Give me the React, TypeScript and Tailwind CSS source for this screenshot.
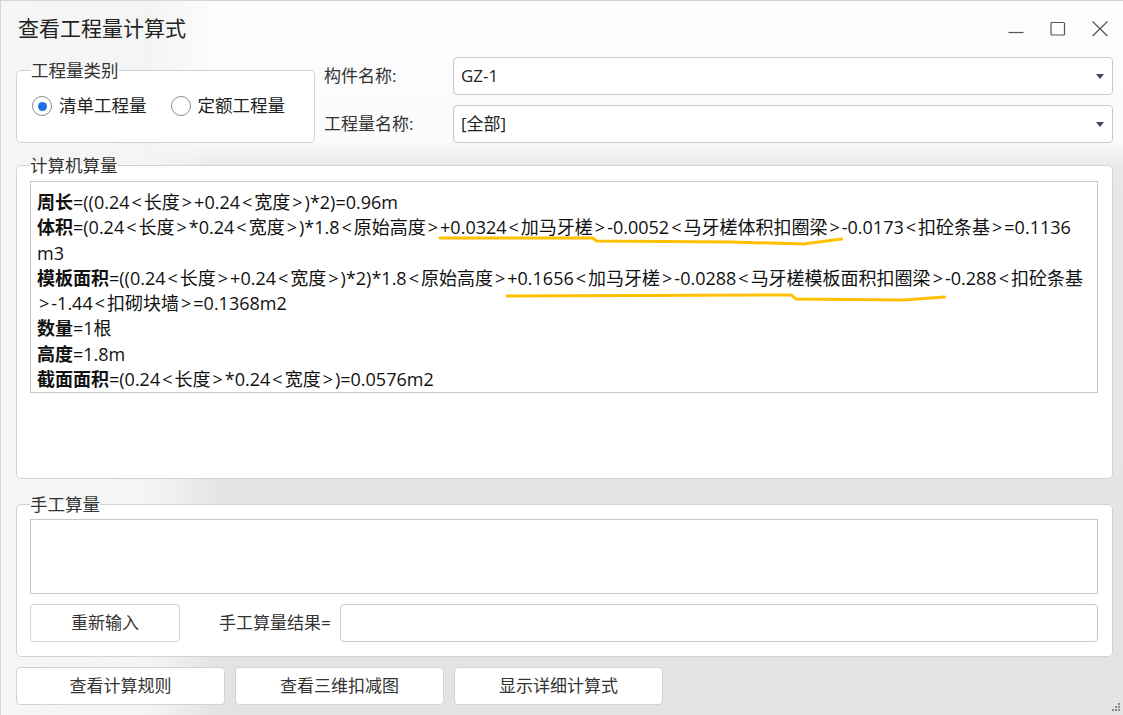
import React from "react";

const F = "font-['Open_Sans','Noto_Sans_CJK_SC',sans-serif]";

function T({ s }: { s: string }) {
  const parts = s.split(/([<>])/);
  return (
    <>
      {parts.map((p, i) =>
        p === "<" || p === ">" ? (
          <span key={i} className="px-[2px]">
            {p}
          </span>
        ) : (
          <React.Fragment key={i}>{p}</React.Fragment>
        )
      )}
    </>
  );
}

function Radio({ checked, label }: { checked?: boolean; label: string }) {
  return (
    <div className="flex items-center gap-[7px]">
      <span className="w-[20px] h-[20px] rounded-full border border-[#8c8c8c] bg-white flex items-center justify-center">
        {checked && <span className="w-[9px] h-[9px] rounded-full bg-[#1f6fe0]" />}
      </span>
      <span className="text-[17.5px] text-[#222] leading-none">{label}</span>
    </div>
  );
}

function Select({ value }: { value: string }) {
  return (
    <div className="flex-1 h-[38px] bg-white border border-[#c9c9c9] rounded-[4px] flex items-center justify-between pl-[7px] pr-[8px]">
      <span className="text-[17px] text-[#222]">{value}</span>
      <svg width="8" height="5" viewBox="0 0 8 5">
        <path d="M0 0 L8 0 L4 5 Z" fill="#3d4656" />
      </svg>
    </div>
  );
}

function Btn({ label, w }: { label: string; w: string }) {
  return (
    <div className={`${w} h-[38px] bg-white border border-[#d3d3d3] rounded-[4px] flex items-center justify-center text-[17px] text-[#333]`}>
      {label}
    </div>
  );
}

function U({ s, pts, top }: { s: string; pts: string; top: string }) {
  return (
    <span className="relative">
      <T s={s} />
      <svg
        className={`absolute left-0 w-full ${top} h-[10px] overflow-visible pointer-events-none`}
        viewBox="0 0 100 10"
        preserveAspectRatio="none"
      >
        <polyline
          points={pts}
          fill="none"
          stroke="#ffc000"
          strokeWidth="3"
          strokeLinecap="round"
          strokeLinejoin="round"
          vectorEffect="non-scaling-stroke"
        />
      </svg>
    </span>
  );
}

export default function App() {
  return (
    <div
      className={`${F} relative w-[1123px] h-[715px] overflow-hidden border-l border-t border-[#d6d6d6] bg-[linear-gradient(90deg,#f6f6f6_0px,#f4f4f4_150px,rgba(240,240,240,0)_215px),linear-gradient(180deg,#fdfdfd_0px,#fbfbfb_140px,#e8e8e8_168px,#e3e3e3_100%)] flex flex-col`}
    >
      {/* Title bar */}
      <div className="h-[56px] flex items-center justify-between pl-[17px] pr-[2px]">
        <span className="text-[21px] text-[#222]">查看工程量计算式</span>
        <div className="flex items-center">
          <div className="w-[42px] h-[40px] flex items-center justify-center">
            <svg width="16" height="16" viewBox="0 0 16 16">
              <line x1="0.5" y1="11.5" x2="15.5" y2="11.5" stroke="#555" strokeWidth="1.2" />
            </svg>
          </div>
          <div className="w-[42px] h-[40px] flex items-center justify-center">
            <svg width="16" height="16" viewBox="0 0 16 16">
              <rect x="1" y="1.5" width="13.5" height="12.5" rx="1" fill="none" stroke="#555" strokeWidth="1.2" />
            </svg>
          </div>
          <div className="w-[42px] h-[40px] flex items-center justify-center">
            <svg width="16" height="16" viewBox="0 0 16 16">
              <path d="M0.5 0.5 L15.5 15 M15.5 0.5 L0.5 15" stroke="#555" strokeWidth="1.2" fill="none" />
            </svg>
          </div>
        </div>
      </div>

      <div className="flex flex-col pl-[15px] pr-[10px]">
        {/* Top row */}
        <div className="flex h-[86px]">
          <fieldset className="w-[299px] h-[85px] mt-[1px] border border-[#d2d2d2] rounded-[5px] bg-white pl-[14px] pr-[14px]">
            <legend className="text-[17.5px] leading-[24px] text-[#333] px-0">工程量类别</legend>
            <div className="flex items-center gap-[24px] mt-[14px] pl-[1px]">
              <Radio checked label="清单工程量" />
              <Radio label="定额工程量" />
            </div>
          </fieldset>
          <div className="flex-1 flex flex-col gap-[10px] ml-[9px]">
            <div className="flex items-center">
              <span className="w-[129px] text-[17px] text-[#333]">构件名称:</span>
              <Select value="GZ-1" />
            </div>
            <div className="flex items-center">
              <span className="w-[129px] text-[17px] text-[#333]">工程量名称:</span>
              <Select value="[全部]" />
            </div>
          </div>
        </div>

        {/* 计算机算量 */}
        <fieldset className="mt-[10px] h-[326px] border border-[#d2d2d2] rounded-[5px] bg-white pl-[13px] pr-[14px] pb-[13px] flex flex-col">
          <legend className="text-[17.5px] leading-[24px] text-[#333] px-0">计算机算量</legend>
          <div className="mt-[4px] flex-1 border border-[#c9c9c9] bg-white pt-[8px] pl-[6px] text-[18px] leading-[25.3px] text-[#111] whitespace-nowrap">
            <div><b>周长</b><T s="=((0.24<长度>+0.24<宽度>)*2)=0.96m" /></div>
            <div>
              <b>体积</b><T s="=(0.24<长度>*0.24<宽度>)*1.8<原始高度>" />
              <U top="top-[calc(100%-2px)]" pts="0,1 38,1 39,4 72.4,5 90.5,7 100,2" s="+0.0324<加马牙槎>-0.0052<马牙槎体积扣圈梁>" />
              <T s="-0.0173<扣砼条基>=0.1136" />
            </div>
            <div>m3</div>
            <div>
              <b>模板面积</b><T s="=((0.24<长度>+0.24<宽度>)*2)*1.8<原始高度>" />
              <U top="top-[calc(100%+3px)]" pts="0,3 65,2 66,6 90.7,7 100,4" s="+0.1656<加马牙槎>-0.0288<马牙槎模板面积扣圈梁>" />
              <T s="-0.288<扣砼条基" />
            </div>
            <div><T s=">-1.44<扣砌块墙>=0.1368m2" /></div>
            <div><b>数量</b>=1根</div>
            <div><b>高度</b>=1.8m</div>
            <div><b>截面面积</b><T s="=(0.24<长度>*0.24<宽度>)=0.0576m2" /></div>
          </div>
        </fieldset>

        {/* 手工算量 */}
        <fieldset className="mt-[13px] h-[165px] border border-[#d2d2d2] rounded-[5px] bg-white pl-[13px] pr-[14px] pb-[14px] flex flex-col">
          <legend className="text-[17.5px] leading-[24px] text-[#333] px-0">手工算量</legend>
          <div className="mt-[3px] h-[75px] border border-[#c9c9c9] bg-white" />
          <div className="mt-[10px] flex items-center">
            <Btn label="重新输入" w="w-[150px]" />
            <span className="ml-[39px] text-[17px] text-[#333]">手工算量结果=</span>
            <div className="ml-[9px] flex-1 h-[38px] border border-[#c9c9c9] rounded-[4px] bg-white" />
          </div>
        </fieldset>

        {/* Bottom buttons */}
        <div className="mt-[10px] flex gap-[10px]">
          <Btn label="查看计算规则" w="w-[209px]" />
          <Btn label="查看三维扣减图" w="w-[209px]" />
          <Btn label="显示详细计算式" w="w-[209px]" />
        </div>
      </div>

      {/* resize grip */}
      <svg className="absolute right-[2px] bottom-[3px]" width="10" height="10" viewBox="0 0 10 10">
        <rect x="7" y="1" width="2" height="2" fill="#8a8a8a" />
        <rect x="4" y="4" width="2" height="2" fill="#8a8a8a" />
        <rect x="7" y="4" width="2" height="2" fill="#8a8a8a" />
        <rect x="1" y="7" width="2" height="2" fill="#8a8a8a" />
        <rect x="4" y="7" width="2" height="2" fill="#8a8a8a" />
        <rect x="7" y="7" width="2" height="2" fill="#8a8a8a" />
      </svg>
    </div>
  );
}
